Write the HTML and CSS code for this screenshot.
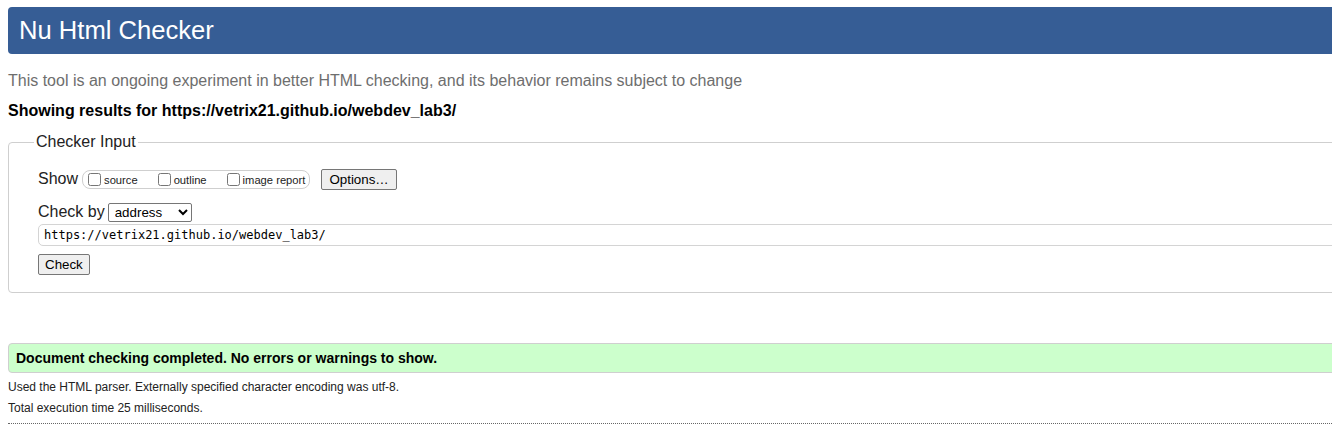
FILE: index.html
```html
<!DOCTYPE html>
<html lang="en">
<head>
<meta charset="utf-8">
<title>Nu Html Checker</title>
<link rel="stylesheet" href="styles.css">
</head>
<body>
<div class="page">
  <h1 class="title">Nu Html Checker</h1>
  <p class="intro">This tool is an ongoing experiment in better HTML checking, and its behavior remains subject to change</p>
  <p class="showing">Showing results for https://vetrix21.github.io/webdev_lab3/</p>
  <form class="checker">
    <fieldset class="checker-set">
      <legend class="checker-legend">Checker Input</legend>
      <div class="row show-row">
        <span class="row-label">Show</span>
        <fieldset class="opts">
          <label class="opt"><input type="checkbox" class="cb"><span>source</span></label>
          <label class="opt"><input type="checkbox" class="cb"><span>outline</span></label>
          <label class="opt"><input type="checkbox" class="cb"><span>image report</span></label>
        </fieldset>
        <button type="button" class="btn options-btn">Options…</button>
      </div>
      <div class="row check-row">
        <span class="row-label">Check by</span>
        <select class="sel"><option>address</option></select>
      </div>
      <input class="url" type="url" value="https://vetrix21.github.io/webdev_lab3/">
      <div class="submit-row"><button type="button" class="btn check-btn">Check</button></div>
    </fieldset>
  </form>
  <div class="success">Document checking completed. No errors or warnings to show.</div>
  <p class="details">Used the HTML parser. Externally specified character encoding was utf-8.</p>
  <p class="details">Total execution time 25 milliseconds.</p>
  <hr class="dotted">
</div>
</body>
</html>
```

FILE: styles.css
```css
html {
  overflow: hidden;
  background: #fff;
}
body {
  margin: 0;
  font-family: "Liberation Sans", Arial, sans-serif;
  color: #000;
}
.page {
  width: 1420px;
  padding: 7px 8px 0;
}
.title {
  margin: 0;
  height: 47px;
  line-height: 47px;
  padding-left: 11px;
  background: #365d95;
  color: #fff;
  font-size: 25.6px;
  font-weight: normal;
  border-radius: 4px;
}
.intro {
  margin: 17px 0 0;
  font-size: 16px;
  line-height: 20px;
  color: #6e6e6e;
}
.showing {
  margin: 10px 0 0;
  font-size: 16px;
  line-height: 20px;
  font-weight: bold;
}
.checker {
  margin: 12px 0 0;
}
.checker-set {
  margin: 0;
  padding: 18px 29px 17px;
  border: 1px solid #cfcfcf;
  border-radius: 4px;
  min-width: 0;
}
.checker-legend {
  font-size: 16px;
  line-height: 18px;
  padding: 0 2px;
  margin-left: -4px;
  color: #222;
}
.row {
  display: flex;
  align-items: center;
  height: 20px;
}
.row-label {
  font-size: 16px;
  line-height: 20px;
  color: #222;
}
.show-row .row-label {
  margin-right: 4px;
}
.opts {
  display: flex;
  align-items: center;
  margin: 0;
  padding: 0 4px 0 5px;
  height: 17px;
  border: 1px solid #cfcfcf;
  border-radius: 8px;
  min-width: 0;
}
.opt {
  display: flex;
  align-items: center;
  font-size: 11.2px;
  margin-right: 20px;
  color: #222;
}
.opt span {
  position: relative;
  top: 1px;
}
.opt:last-child {
  margin-right: 0;
}
.cb {
  width: 13px;
  height: 13px;
  margin: 0 3px 0 0;
}
.btn {
  font-family: "Liberation Sans", Arial, sans-serif;
  font-size: 13.33px;
  color: #000;
  background: #efefef;
  border: 1px solid #767676;
  border-radius: 2px;
  padding: 1px 6px;
  height: 21px;
  line-height: 17px;
}
.options-btn {
  margin-left: 11px;
  padding: 1px 7px;
}
.check-row {
  margin-top: 13px;
}
.check-row .row-label {
  margin-right: 3px;
}
.sel {
  width: 84px;
  height: 19px;
  font-family: "Liberation Sans", Arial, sans-serif;
  font-size: 13.33px;
  padding: 0 0 0 2px;
  border: 1px solid #767676;
  border-radius: 2px;
  background: #fff;
  color: #000;
}
.url {
  display: block;
  box-sizing: border-box;
  margin-top: 2px;
  width: 1380px;
  height: 22px;
  padding: 0 5px;
  border: 1px solid #d4d4d4;
  border-radius: 5px;
  font-family: "DejaVu Sans Mono", monospace;
  font-size: 12px;
  color: #000;
}
.submit-row {
  margin-top: 8px;
}
.check-btn {
  padding: 1px 6px;
}
.success {
  margin-top: 50px;
  height: 28px;
  line-height: 28px;
  padding-left: 7px;
  background: #ccffcc;
  border: 1px solid #cfcfcf;
  border-radius: 4px;
  font-size: 14px;
  font-weight: bold;
}
.details {
  margin: 5px 0 0;
  font-size: 12px;
  line-height: 18px;
  color: #222;
}
.details + .details {
  margin-top: 3px;
}
.dotted {
  margin: 6px 0 0;
  border: 0;
  border-top: 1px dotted #666;
  height: 0;
}
```
